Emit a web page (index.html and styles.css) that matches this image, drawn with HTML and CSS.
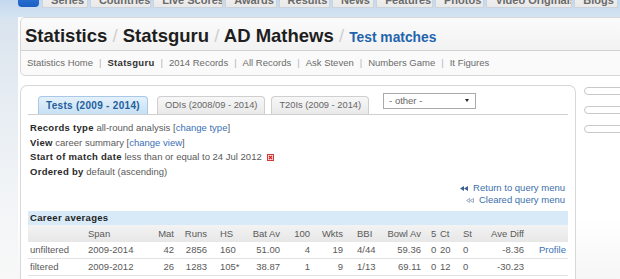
FILE: index.html
```html
<!DOCTYPE html>
<html>
<head>
<meta charset="utf-8">
<link rel="stylesheet" href="styles.css">
</head>
<body>
<div class="topbar">
  <nav class="nav">
    <span class="logo"></span>
    <span class="navtab">Series</span>
    <span class="navtab">Countries</span>
    <span class="navtab">Live Scores</span>
    <span class="navtab">Awards</span>
    <span class="navtab">Results</span>
    <span class="navtab">News</span>
    <span class="navtab">Features</span>
    <span class="navtab">Photos</span>
    <span class="navtab">Video Originals</span>
    <span class="navtab">Blogs</span>
  </nav>
</div>
<div class="page">
  <div class="titlebox">
    <h1 class="title">Statistics <span class="slash">/</span> Statsguru <span class="slash">/</span> AD Mathews <span class="slash">/</span> <span class="subtitle">Test matches</span></h1>
    <div class="subnav">
      <a class="snl">Statistics Home</a><span class="bar">|</span><a class="snl cur">Statsguru</a><span class="bar">|</span><a class="snl">2014 Records</a><span class="bar">|</span><a class="snl">All Records</a><span class="bar">|</span><a class="snl">Ask Steven</a><span class="bar">|</span><a class="snl">Numbers Game</a><span class="bar">|</span><a class="snl">It Figures</a>
    </div>
  </div>
  <div class="cols">
    <div class="content">
      <div class="tabs">
        <span class="tab active">Tests (2009 - 2014)</span>
        <span class="tab">ODIs (2008/09 - 2014)</span>
        <span class="tab">T20Is (2009 - 2014)</span>
        <span class="select">- other -<span class="arrow"></span></span>
      </div>
      <div class="info">
        <div><b>Records type</b> all-round analysis [<a class="lnk">change type</a>]</div>
        <div><b>View</b> career summary [<a class="lnk">change view</a>]</div>
        <div><b>Start of match date</b> less than or equal to 24 Jul 2012 <span class="xbox"><svg width="7" height="7" viewBox="0 0 7 7"><rect x="0.5" y="0.5" width="6" height="6" fill="#f6d6d6" stroke="#d23b3b"/><path d="M2 2 L5 5 M5 2 L2 5" stroke="#d22" stroke-width="1.1"/></svg></span></div>
        <div><b>Ordered by</b> default (ascending)</div>
      </div>
      <div class="back">
        <div><svg class="ico" width="8" height="5" viewBox="0 0 8 5"><path d="M0 2.5 L4 0 L4 5 Z M4 2.5 L8 0 L8 5 Z" fill="#3d5f8c"/></svg><a class="lnk">Return to query menu</a></div>
        <div><svg class="ico" width="8" height="5" viewBox="0 0 8 5"><path d="M0.5 2.5 L3.8 0.5 L3.8 4.5 Z M4.3 2.5 L7.5 0.5 L7.5 4.5 Z" fill="none" stroke="#8a9bb0" stroke-width="0.8"/></svg><a class="lnk">Cleared query menu</a></div>
      </div>
      <div class="avg">
        <div class="cap">Career averages</div>
        <div class="row head">
          <span></span><span>Span</span><span>Mat</span><span>Runs</span><span>HS</span><span>Bat Av</span><span>100</span><span>Wkts</span><span>BBI</span><span>Bowl Av</span><span>5</span><span>Ct</span><span>St</span><span>Ave Diff</span><span></span>
        </div>
        <div class="row">
          <span>unfiltered</span><span>2009-2014</span><span>42</span><span>2856</span><span>160</span><span>51.00</span><span>4</span><span>19</span><span>4/44</span><span>59.36</span><span>0</span><span>20</span><span>0</span><span>-8.36</span><span><a class="lnk">Profile</a></span>
        </div>
        <div class="row">
          <span>filtered</span><span>2009-2012</span><span>26</span><span>1283</span><span>105*</span><span>38.87</span><span>1</span><span>9</span><span>1/13</span><span>69.11</span><span>0</span><span>12</span><span>0</span><span>-30.23</span><span></span>
        </div>
      </div>
    </div>
    <div class="side">
      <div class="pill"></div>
      <div class="pill"></div>
      <div class="pill"></div>
    </div>
  </div>
</div>
</body>
</html>
```
FILE: styles.css
```css
html, body {
  margin: 0;
  padding: 0;
}
body {
  width: 620px;
  height: 279px;
  overflow: hidden;
  font-family: "Liberation Sans", Arial, sans-serif;
  font-size: 9.5px;
  color: #555;
  background: linear-gradient(to bottom, #d3e2f0 0, #dde6ef 40px, #e6ecf2 100px, #f1f4f7 190px, #f8f8f8 279px);
}
a { text-decoration: none; }

.topbar {
  height: 17px;
  overflow: hidden;
  background: linear-gradient(to bottom, #c4d9ee 0, #d3e3f2 100%);
}
.nav {
  display: flex;
  margin-left: 18px;
  margin-top: -13px;
}
.logo {
  width: 25px;
  height: 20px;
  background: linear-gradient(#3d86e0, #1a5fc4);
  border-radius: 0 0 4px 4px;
  margin-right: 3px;
}
.navtab {
  height: 15px;
  padding: 5px 8px 0;
  margin-right: 2px;
  background: linear-gradient(#f6f6f6, #e9e9e9);
  border: 1px solid #cdd3da;
  border-top: 0;
  font: bold 11px "Liberation Sans", Arial, sans-serif;
  line-height: 16px;
  color: #6a6a6a;
  white-space: nowrap;
  overflow: hidden;
}

.page {
  margin-left: 18px;
  width: 602px;
  height: 262px;
  background: linear-gradient(to bottom, #fff 0, #fff 200px, #f6f6f6 262px);
}
.titlebox {
  margin-left: 2px;
  width: 700px;
  border: 1px solid #d8d8d8;
  border-radius: 5px 0 0 5px;
  background: #f9f9f9;
}
.title {
  margin: 0;
  height: 29px;
  padding: 3px 0 0 4px;
  font: bold 18.5px/29px "Liberation Sans", Arial, sans-serif;
  color: #1e1e1e;
  border-bottom: 1px solid #d2d2d2;
  background: linear-gradient(#fbfbfb, #f2f2f2);
  border-radius: 5px 0 0 0;
  white-space: nowrap;
}
.slash {
  color: #cfcfcf;
  font-weight: normal;
}
.subtitle {
  font-size: 13.8px;
  color: #1f64ad;
}
.subnav {
  height: 24px;
  line-height: 24px;
  padding-left: 6px;
  color: #6b6b6b;
  white-space: nowrap;
  background: #fafafa;
  border-radius: 0 0 0 5px;
}
.snl { color: #6b6b6b; }
.snl.cur { color: #333; font-weight: bold; letter-spacing: 0.3px; }
.bar {
  color: #b5b5b5;
  margin: 0 6px;
}

.cols {
  display: flex;
  margin-top: 9px;
}
.content {
  margin-left: 2px;
  width: 540px;
  height: 200px;
  padding: 7px 7px 0;
  border: 1px solid #d8d8d8;
  border-bottom: 0;
  border-radius: 7px 7px 0 0;
  background: #fff;
}
.tabs {
  display: flex;
  align-items: flex-end;
  height: 21px;
  padding-left: 10px;
  border-bottom: 1px solid #cfcfcf;
}
.tab {
  height: 17px;
  line-height: 17px;
  padding: 0 7px;
  margin-right: 6px;
  font-size: 9.3px;
  color: #666;
  white-space: nowrap;
  border: 1px solid #cfcfcf;
  border-bottom: 0;
  border-radius: 4px 4px 0 0;
  background: linear-gradient(#f7f7f7, #e9e9e9);
}
.tab.active {
  font-size: 10px;
  font-weight: bold;
  letter-spacing: 0.3px;
  color: #245f9c;
  border-color: #a8c8e6;
  background: linear-gradient(#e4f1fb, #c7e0f4);
  margin-right: 9px;
}
.select {
  align-self: flex-start;
  position: relative;
  width: 86px;
  height: 14px;
  line-height: 13px;
  margin-left: 8px;
  padding-left: 5px;
  border: 1px solid #aaa;
  background: #fff;
  color: #666;
  font-size: 9.5px;
}
.arrow {
  position: absolute;
  right: 6px;
  top: 5px;
  width: 0;
  height: 0;
  border-left: 2px solid transparent;
  border-right: 2px solid transparent;
  border-top: 3px solid #222;
}

.info {
  margin-top: 6px;
  padding-left: 2px;
  line-height: 14.5px;
  color: #5a5a5a;
}
.info b {
  color: #2a2a2a;
  letter-spacing: 0.3px;
}
.lnk { color: #3a70b5; }
.xbox {
  display: inline-block;
  vertical-align: -1px;
  margin-left: 3px;
  line-height: 0;
}
.back {
  margin-top: 3px;
  padding-right: 3px;
  text-align: right;
  line-height: 11.5px;
}
.back .lnk { color: #3d6fab; }
.ico {
  margin-right: 5px;
  vertical-align: 0;
}

.avg {
  margin-top: 6px;
}
.cap {
  height: 14px;
  line-height: 14px;
  padding-left: 2px;
  font-weight: bold;
  color: #222;
  background: #d8eaf8;
  letter-spacing: 0.3px;
}
.row {
  display: grid;
  grid-template-columns: 60px 62px 24px 33px 38px 35px 30px 33px 38px 40px 19px 23px 17px 44px 44px;
  height: 16px;
  line-height: 16px;
  border-bottom: 1px solid #e2e2e2;
  white-space: nowrap;
  color: #5a5a5a;
}
.row.head {
  background: linear-gradient(#f3f3f3, #e7e7e7);
  border-bottom: 0;
  height: 17px;
  line-height: 17px;
}
.row > :nth-child(1) { padding-left: 2px; }
.row > :nth-child(3),
.row > :nth-child(4),
.row > :nth-child(6),
.row > :nth-child(7),
.row > :nth-child(8),
.row > :nth-child(10),
.row > :nth-child(14) { text-align: right; }
.row > :nth-child(5) { padding-left: 13px; }
.row > :nth-child(9) { padding-left: 14px; }
.row > :nth-child(11) { padding-left: 10px; }
.row > :nth-child(15) { padding-left: 15px; }

.side {
  margin-left: 8px;
  padding-top: 2px;
  display: flex;
  flex-direction: column;
  gap: 11px;
}
.pill {
  width: 60px;
  height: 6px;
  border: 1px solid #c8c8c8;
  border-radius: 4px;
  background: #fff;
}
```
